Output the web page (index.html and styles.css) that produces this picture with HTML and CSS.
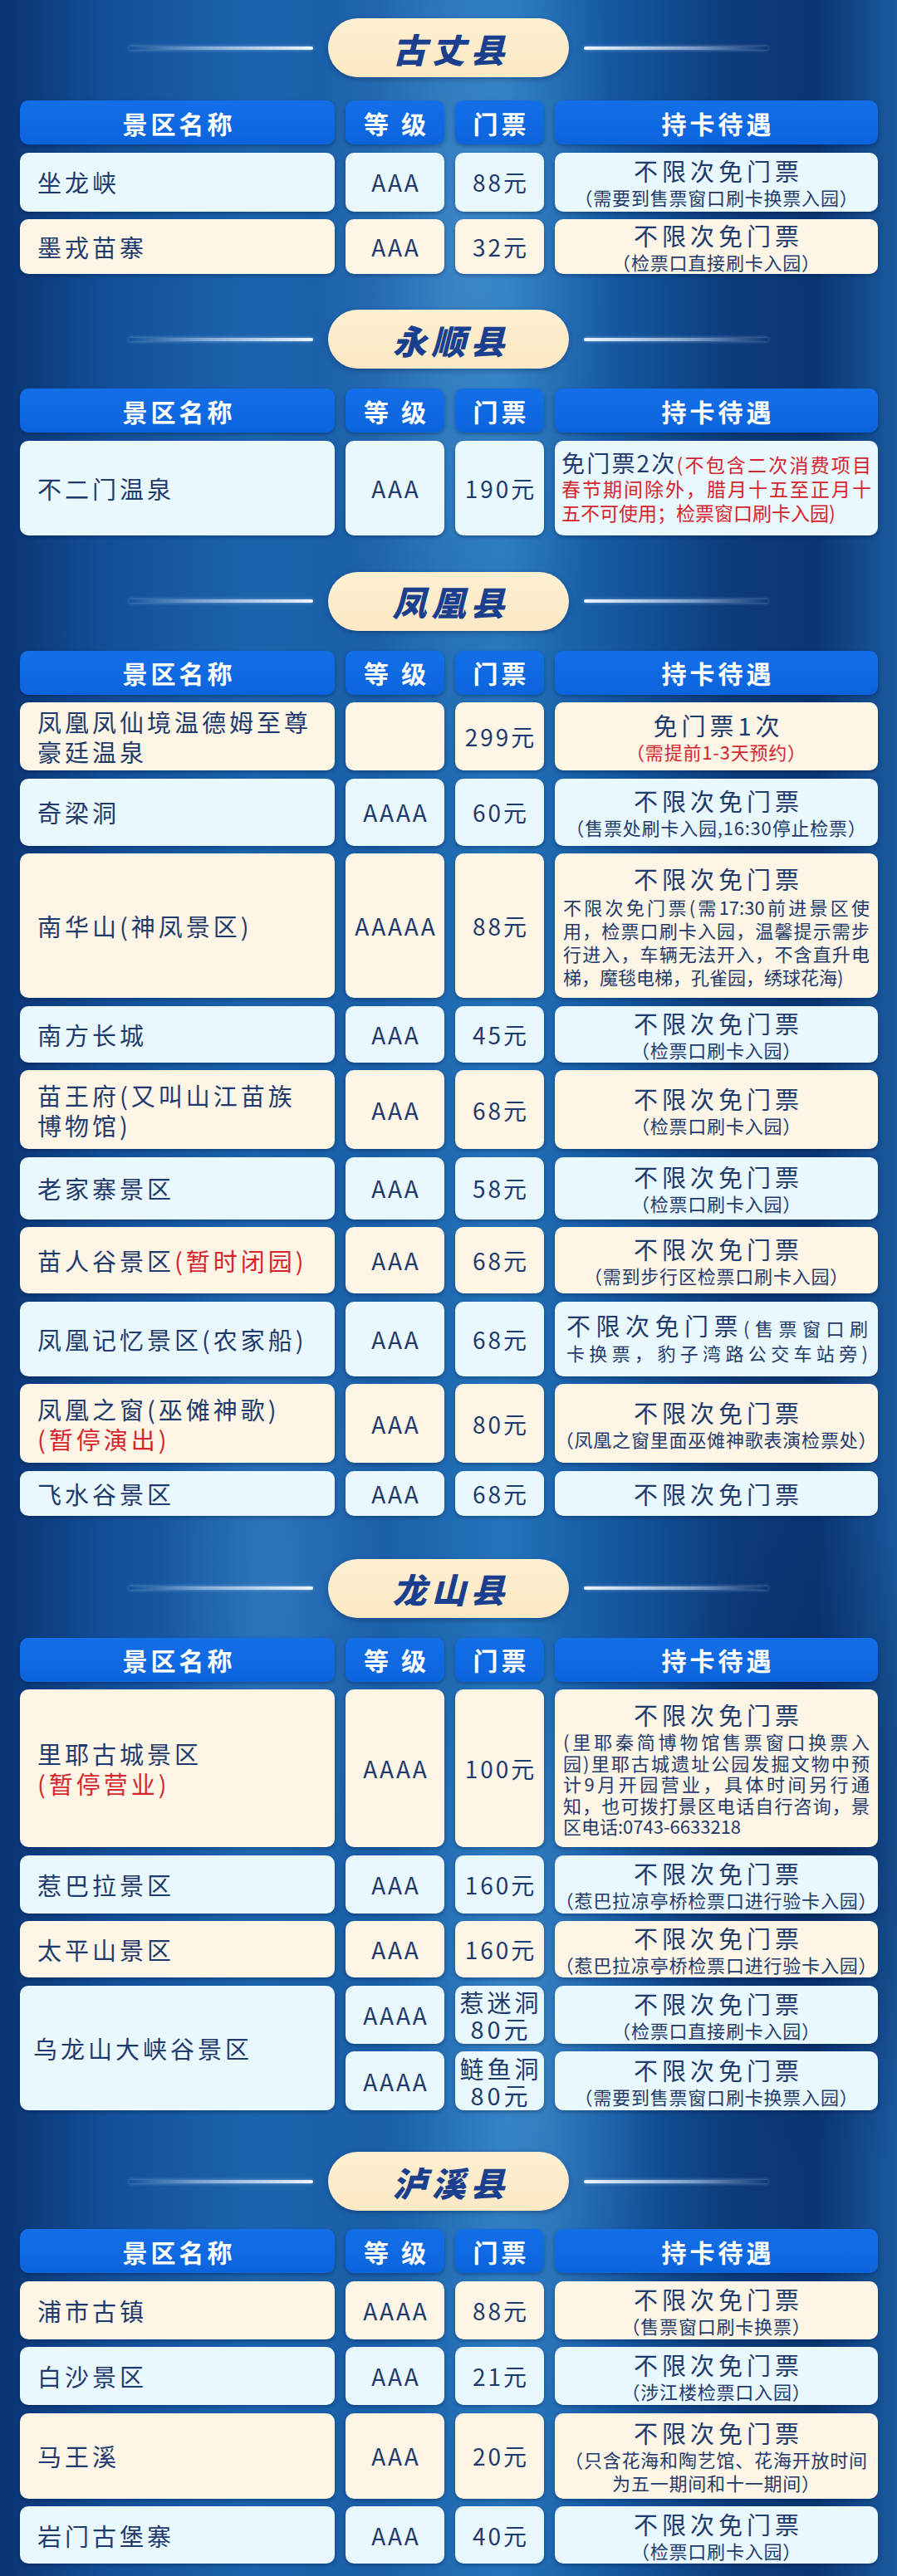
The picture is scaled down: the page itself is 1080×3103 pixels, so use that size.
FILE: index.html
```html
<!DOCTYPE html>
<html lang="zh-CN">
<head>
<meta charset="utf-8">
<title>湘西景区持卡待遇</title>
<link rel="stylesheet" href="styles.css">
</head>
<body>
<div class="page">

  <section class="sec s1">
    <div class="title"><span class="line l"></span><div class="pill">古丈县</div><span class="line r"></span></div>
    <div class="tbl t1">
      <div class="hd">景区名称</div><div class="hd">等&nbsp;级</div><div class="hd">门票</div><div class="hd">持卡待遇</div>

      <div class="c name cy">坐龙峡</div><div class="c lv cy">AAA</div><div class="c pr cy">88元</div>
      <div class="c ben cy"><span class="m">不限次免门票</span><span class="s">（需要到售票窗口刷卡换票入园）</span></div>

      <div class="c name cr">墨戎苗寨</div><div class="c lv cr">AAA</div><div class="c pr cr">32元</div>
      <div class="c ben cr"><span class="m">不限次免门票</span><span class="s">（检票口直接刷卡入园）</span></div>
    </div>
  </section>

  <section class="sec s2">
    <div class="title"><span class="line l"></span><div class="pill">永顺县</div><span class="line r"></span></div>
    <div class="tbl t2">
      <div class="hd">景区名称</div><div class="hd">等&nbsp;级</div><div class="hd">门票</div><div class="hd">持卡待遇</div>

      <div class="c name cy">不二门温泉</div><div class="c lv cy">AAA</div><div class="c pr cy">190元</div>
      <div class="c ben cy">
        <div class="para p-ys">
          <span class="j"><span class="mm">免门票2次</span><span class="red">(不包含二次消费项目</span></span>
          <span class="j red">春节期间除外，腊月十五至正月十</span>
          <span class="red">五不可使用；检票窗口刷卡入园)</span>
        </div>
      </div>
    </div>
  </section>

  <section class="sec s3">
    <div class="title"><span class="line l"></span><div class="pill">凤凰县</div><span class="line r"></span></div>
    <div class="tbl t3">
      <div class="hd">景区名称</div><div class="hd">等&nbsp;级</div><div class="hd">门票</div><div class="hd">持卡待遇</div>

      <div class="c name cr"><span>凤凰凤仙境温德姆至尊</span><span>豪廷温泉</span></div><div class="c lv cr"></div><div class="c pr cr">299元</div>
      <div class="c ben cr"><span class="m">免门票1次</span><span class="s red">（需提前1-3天预约）</span></div>

      <div class="c name cy">奇梁洞</div><div class="c lv cy">AAAA</div><div class="c pr cy">60元</div>
      <div class="c ben cy"><span class="m">不限次免门票</span><span class="s">（售票处刷卡入园,16:30停止检票）</span></div>

      <div class="c name cr">南华山(神凤景区)</div><div class="c lv cr">AAAAA</div><div class="c pr cr">88元</div>
      <div class="c ben cr"><span class="m">不限次免门票</span>
        <div class="para p-nh">
          <span class="j">不限次免门票(需17:30前进景区使</span>
          <span class="j">用，检票口刷卡入园，温馨提示需步</span>
          <span class="j">行进入，车辆无法开入，不含直升电</span>
          <span>梯，魔毯电梯，孔雀园，绣球花海)</span>
        </div>
      </div>

      <div class="c name cy">南方长城</div><div class="c lv cy">AAA</div><div class="c pr cy">45元</div>
      <div class="c ben cy"><span class="m">不限次免门票</span><span class="s">（检票口刷卡入园）</span></div>

      <div class="c name cr"><span>苗王府(又叫山江苗族</span><span>博物馆)</span></div><div class="c lv cr">AAA</div><div class="c pr cr">68元</div>
      <div class="c ben cr"><span class="m">不限次免门票</span><span class="s">（检票口刷卡入园）</span></div>

      <div class="c name cy">老家寨景区</div><div class="c lv cy">AAA</div><div class="c pr cy">58元</div>
      <div class="c ben cy"><span class="m">不限次免门票</span><span class="s">（检票口刷卡入园）</span></div>

      <div class="c name cr"><span>苗人谷景区<span class="red">(暂时闭园)</span></span></div><div class="c lv cr">AAA</div><div class="c pr cr">68元</div>
      <div class="c ben cr"><span class="m">不限次免门票</span><span class="s">（需到步行区检票口刷卡入园）</span></div>

      <div class="c name cy">凤凰记忆景区(农家船)</div><div class="c lv cy">AAA</div><div class="c pr cy">68元</div>
      <div class="c ben cy">
        <div class="para p-jy">
          <span class="j"><span class="mm">不限次免门票</span>(售票窗口刷</span>
          <span class="j">卡换票，豹子湾路公交车站旁)</span>
        </div>
      </div>

      <div class="c name cr"><span>凤凰之窗(巫傩神歌)</span><span class="red">(暂停演出)</span></div><div class="c lv cr">AAA</div><div class="c pr cr">80元</div>
      <div class="c ben cr"><span class="m">不限次免门票</span><span class="s">（凤凰之窗里面巫傩神歌表演检票处）</span></div>

      <div class="c name cy">飞水谷景区</div><div class="c lv cy">AAA</div><div class="c pr cy">68元</div>
      <div class="c ben cy"><span class="m">不限次免门票</span></div>
    </div>
  </section>

  <section class="sec s4">
    <div class="title"><span class="line l"></span><div class="pill">龙山县</div><span class="line r"></span></div>
    <div class="tbl t4">
      <div class="hd">景区名称</div><div class="hd">等&nbsp;级</div><div class="hd">门票</div><div class="hd">持卡待遇</div>

      <div class="c name cr"><span>里耶古城景区</span><span class="red">(暂停营业)</span></div><div class="c lv cr">AAAA</div><div class="c pr cr">100元</div>
      <div class="c ben cr"><span class="m">不限次免门票</span>
        <div class="para p-ly">
          <span class="j">(里耶秦简博物馆售票窗口换票入</span>
          <span class="j">园)里耶古城遗址公园发掘文物中预</span>
          <span class="j">计9月开园营业，具体时间另行通</span>
          <span class="j">知，也可拨打景区电话自行咨询，景</span>
          <span>区电话:0743-6633218</span>
        </div>
      </div>

      <div class="c name cy">惹巴拉景区</div><div class="c lv cy">AAA</div><div class="c pr cy">160元</div>
      <div class="c ben cy"><span class="m">不限次免门票</span><span class="s">（惹巴拉凉亭桥检票口进行验卡入园）</span></div>

      <div class="c name cr">太平山景区</div><div class="c lv cr">AAA</div><div class="c pr cr">160元</div>
      <div class="c ben cr"><span class="m">不限次免门票</span><span class="s">（惹巴拉凉亭桥检票口进行验卡入园）</span></div>

      <div class="c name cy span2 wl">乌龙山大峡谷景区</div><div class="c lv cy">AAAA</div><div class="c pr cy two"><span>惹迷洞</span><span>80元</span></div>
      <div class="c ben cy"><span class="m">不限次免门票</span><span class="s">（检票口直接刷卡入园）</span></div>
      <div class="c lv cy">AAAA</div><div class="c pr cy two"><span>鲢鱼洞</span><span>80元</span></div>
      <div class="c ben cy"><span class="m">不限次免门票</span><span class="s">（需要到售票窗口刷卡换票入园）</span></div>
    </div>
  </section>

  <section class="sec s5">
    <div class="title"><span class="line l"></span><div class="pill">泸溪县</div><span class="line r"></span></div>
    <div class="tbl t5">
      <div class="hd">景区名称</div><div class="hd">等&nbsp;级</div><div class="hd">门票</div><div class="hd">持卡待遇</div>

      <div class="c name cr">浦市古镇</div><div class="c lv cr">AAAA</div><div class="c pr cr">88元</div>
      <div class="c ben cr"><span class="m">不限次免门票</span><span class="s">（售票窗口刷卡换票）</span></div>

      <div class="c name cy">白沙景区</div><div class="c lv cy">AAA</div><div class="c pr cy">21元</div>
      <div class="c ben cy"><span class="m">不限次免门票</span><span class="s">（涉江楼检票口入园）</span></div>

      <div class="c name cr">马王溪</div><div class="c lv cr">AAA</div><div class="c pr cr">20元</div>
      <div class="c ben cr"><span class="m">不限次免门票</span><span class="s">（只含花海和陶艺馆、花海开放时间</span><span class="s">为五一期间和十一期间）</span></div>

      <div class="c name cy">岩门古堡寨</div><div class="c lv cy">AAA</div><div class="c pr cy">40元</div>
      <div class="c ben cy"><span class="m">不限次免门票</span><span class="s">（检票口刷卡入园）</span></div>
    </div>
  </section>

</div>
</body>
</html>
```

FILE: styles.css
```css
* { box-sizing: border-box; }

html, body {
  margin: 0;
  padding: 0;
  background: #0e4686;
}

body {
  font-family: "Noto Sans CJK SC", "Noto Sans", sans-serif;
  color: #1f3a6c;
}

.page {
  width: 1080px;
  min-height: 3103px;
  padding-top: 22px;
  overflow: hidden;
  background:
    radial-gradient(ellipse 260px 900px at 560px 300px, rgba(110, 180, 235, 0.35), transparent 70%),
    radial-gradient(ellipse 200px 700px at 330px 1900px, rgba(90, 160, 225, 0.28), transparent 70%),
    radial-gradient(ellipse 220px 800px at 640px 2500px, rgba(110, 180, 235, 0.30), transparent 70%),
    radial-gradient(ellipse 300px 600px at 1000px 2200px, rgba(5, 30, 80, 0.45), transparent 70%),
    linear-gradient(90deg, #0a3472 0%, #134f98 12%, #1b64ad 28%, #1a5fa8 42%, #2474bb 56%, #1559a2 68%, #0c3b7a 82%, #0b3674 91%, #1a5a9f 100%);
}

/* ---------- section title ---------- */
.sec { display: flex; flex-direction: column; }
.s2 { margin-top: 43px; }
.s3 { margin-top: 44px; }
.s4 { margin-top: 52px; }
.s5 { margin-top: 50px; }

.title {
  display: flex;
  align-items: center;
  justify-content: center;
  gap: 18px;
  height: 71px;
  margin-bottom: 24px;
}
.s1 .title { margin-bottom: 28px; }
.s5 .title { margin-bottom: 22px; }

.pill {
  width: 290px;
  height: 71px;
  border-radius: 36px;
  background: linear-gradient(180deg, #fdf0d2 0%, #fce8c4 100%);
  box-shadow: 0 2px 6px rgba(0, 20, 60, 0.35);
  display: flex;
  align-items: center;
  justify-content: center;
  padding-left: 6px;
  font-size: 41px;
  font-weight: 900;
  font-style: italic;
  letter-spacing: 6px;
  color: #1a3f8e;
}

.line {
  width: 222px;
  height: 4px;
  border-radius: 2px;
  box-shadow: 0 0 4px rgba(220, 235, 255, 0.45);
}
.line.l { background: linear-gradient(90deg, rgba(220, 235, 255, 0) 0%, rgba(210, 228, 250, 0.55) 40%, #eef5ff 100%); }
.line.r { background: linear-gradient(90deg, #eef5ff 0%, rgba(210, 228, 250, 0.55) 60%, rgba(220, 235, 255, 0) 100%); }

/* ---------- tables ---------- */
.tbl {
  display: grid;
  grid-template-columns: 379px 119px 107px 389px;
  column-gap: 13px;
  row-gap: 9.5px;
  margin-left: 24px;
}
.t1 { grid-template-rows: 53px 71px 66px; }
.t2 { grid-template-rows: 53px 114px; }
.t3 { grid-template-rows: 53px 82px 81px 174px 68px 95px 75px 80px 90px 95px 54px; }
.t4 { grid-template-rows: 53px 190px 70px 68px 70px 71px; }
.t5 { grid-template-rows: 53px 70px 70px 103px 69px; }

.hd {
  background: linear-gradient(180deg, #136fe8 0%, #0c64dc 100%);
  border-radius: 10px;
  box-shadow: 0 2px 4px rgba(0, 20, 60, 0.35);
  color: #ffffff;
  font-size: 30px;
  font-weight: 700;
  letter-spacing: 4px;
  padding-left: 4px;
  display: flex;
  align-items: center;
  justify-content: center;
  white-space: nowrap;
}

.c {
  border-radius: 10px;
  box-shadow: 0 2px 4px rgba(0, 20, 60, 0.35);
  display: flex;
  flex-direction: column;
  justify-content: center;
  color: #1f3a6c;
  white-space: nowrap;
}
.cy { background: #e9f8fd; }
.cr { background: #fdf5e6; }

.span2 { grid-row: span 2; }

.name {
  align-items: flex-start;
  padding-left: 21px;
  font-size: 29px;
  letter-spacing: 4px;
  line-height: 36px;
}
.name.wl { padding-left: 16px; }

.lv, .pr {
  align-items: center;
  text-align: center;
  font-size: 28px;
  letter-spacing: 3px;
  padding-left: 3px;
  line-height: 32px;
}
.pr.two { font-size: 29px; letter-spacing: 4px; }

.ben {
  align-items: center;
  text-align: center;
}
.m {
  font-size: 29px;
  letter-spacing: 5px;
  padding-left: 5px;
  line-height: 36px;
}
.s {
  font-size: 22px;
  letter-spacing: 0.8px;
  line-height: 28px;
}
.red { color: #d6242d; }

.para {
  align-self: stretch;
  padding: 0 10px;
  text-align: left;
  font-size: 22px;
  line-height: 27px;
}
.para > span { display: block; }
.para .j {
  text-align: justify;
  text-align-last: justify;
}
.para .mm { font-size: 29px; }

.p-ys { font-size: 23px; line-height: 29px; padding: 0 8px; }
.p-ys .mm { font-size: 28px; }
.p-nh { margin-top: 2px; line-height: 28px; }
.p-ly { margin-top: 2px; line-height: 25.5px; }
.p-jy { line-height: 30px; padding: 0 12px 0 14px; }
```
